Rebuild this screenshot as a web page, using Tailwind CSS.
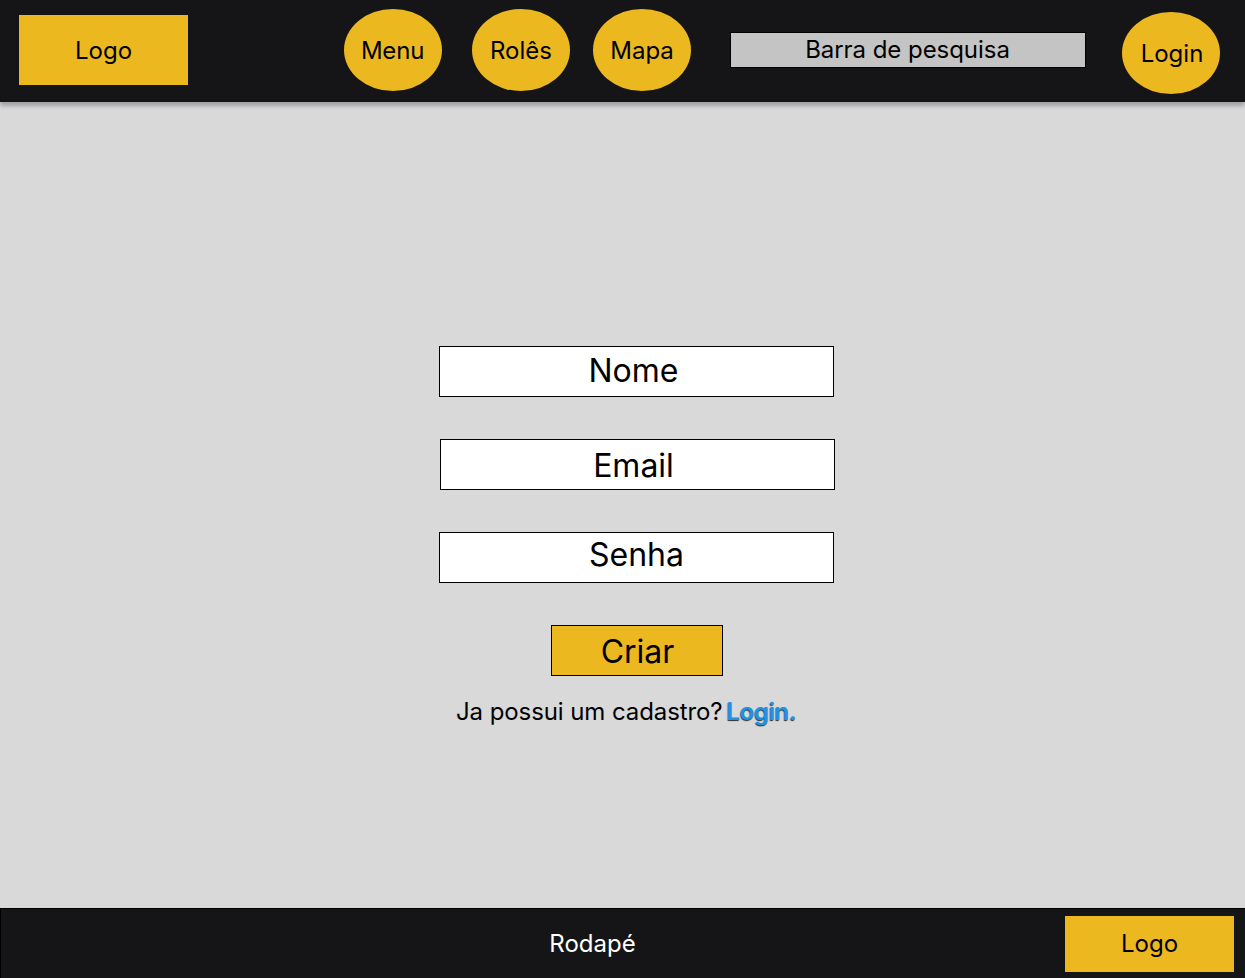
<!DOCTYPE html>
<html lang="en">
<head>
  <meta charset="UTF-8">
  <meta name="viewport" content="width=device-width, initial-scale=1.0">
  <title>Cadastro</title>
  <script src="https://cdn.jsdelivr.net/npm/@tailwindcss/browser@4"></script>
</head>
<body class="h-[978px] w-[1245px] overflow-hidden flex flex-col bg-[#d9d9d9] font-['Inter',sans-serif] text-black">
  <header class="h-[102px] shrink-0 flex items-start bg-[#151517] shadow-[0_4px_4px_rgba(0,0,0,0.25)] relative">
    <div class="ml-[19px] mt-[15px] w-[169px] h-[70px] flex items-center justify-center pt-[2px] bg-[#ebb91f] text-2xl">Logo</div>
    <a class="ml-[156px] mt-[9px] w-[98px] h-[82px] rounded-[50%] flex items-center justify-center pt-[2px] pr-px bg-[#ebb91f] text-2xl tracking-[-0.2px]">Menu</a>
    <a class="ml-[30px] mt-[9px] w-[98px] h-[82px] rounded-[50%] flex items-center justify-center pt-[2px] bg-[#ebb91f] text-2xl">Rolês</a>
    <a class="ml-[23px] mt-[9px] w-[98px] h-[82px] rounded-[50%] flex items-center justify-center pt-[2px] bg-[#ebb91f] text-2xl">Mapa</a>
    <div class="ml-[39px] mt-[32px] w-[356px] h-[36px] flex items-center justify-center pr-px bg-[#c4c4c4] border border-black text-2xl tracking-[-0.05px]">Barra de pesquisa</div>
    <a class="ml-[36px] mt-[12px] w-[98px] h-[82px] rounded-[50%] flex items-center justify-center pt-[2px] pl-[2px] bg-[#ebb91f] text-2xl">Login</a>
  </header>

  <main class="flex-1 flex flex-col items-start pt-[244px] pl-[439px]">
    <div class="w-[395px] h-[51px] flex items-center justify-center pr-[6px] pb-[2px] bg-white border border-black text-[32px]">Nome</div>
    <div class="ml-px mt-[42px] w-[395px] h-[51px] flex items-center justify-center pr-[8px] pt-[2px] bg-white border border-black text-[32px]">Email</div>
    <div class="mt-[42px] w-[395px] h-[51px] flex items-center justify-center pb-[6px] bg-white border border-black text-[32px]">Senha</div>
    <button class="ml-[112px] mt-[42px] w-[172px] h-[51px] flex items-center justify-center pl-px pt-[2px] bg-[#ebb91f] border border-black text-[32px]">Criar</button>
    <p class="ml-[17px] mt-[20px] flex items-center gap-[4px] text-2xl">
      <span class="tracking-[-0.09px]">Ja possui um cadastro?</span>
      <a class="font-semibold text-[#1d95e4] tracking-[-0.35px] [text-shadow:-0.5px_0.5px_1px_rgba(0,0,0,0.8)]">Login.</a>
    </p>
  </main>

  <footer class="h-[70px] shrink-0 flex items-start bg-[#151517] border-t border-l border-black">
    <div class="w-[1064px] h-[69px] flex items-center justify-center pl-[119px] text-2xl text-white">Rodapé</div>
    <div class="mt-[7px] w-[169px] h-[56px] flex items-center justify-center bg-[#ebb91f] text-2xl">Logo</div>
  </footer>
</body>
</html>
